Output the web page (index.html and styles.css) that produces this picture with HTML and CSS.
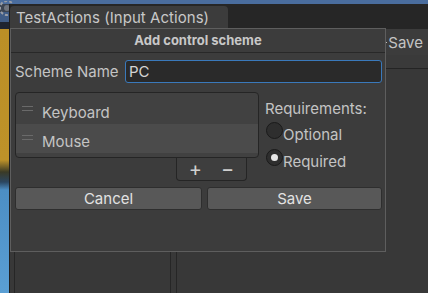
FILE: index.html
```html
<!DOCTYPE html>
<html>
<head>
<meta charset="utf-8">
<link rel="stylesheet" href="styles.css">
</head>
<body>
<div class="stage">
  <svg class="gizmo" width="20" height="20" viewBox="0 0 20 20">
    <circle cx="8" cy="7" r="7" fill="none" stroke="#9a9ea6" stroke-width="2" stroke-dasharray="3 2"/>
    <circle cx="8" cy="7" r="3" fill="#70757e"/>
  </svg>
  <div class="window">
    <div class="tabstrip">
      <div class="tab">TestActions (Input Actions)</div>
    </div>
    <div class="editor">
      <div class="toolbar"><span class="dash"></span><span class="tool-save">Save</span></div>
      <div class="subbar"></div>
      <div class="panes">
        <div class="pane p1"></div>
        <div class="pane p2"></div>
        <div class="pane p3"></div>
        <div class="pane p4"></div>
      </div>
    </div>
    <div class="dialog">
      <div class="dlg-title">Add control scheme</div>
      <div class="dlg-body">
        <div class="name-row">
          <span class="name-label">Scheme Name</span>
          <div class="field">PC</div>
        </div>
        <div class="mid-row">
          <div class="list-col">
            <div class="list">
              <div class="item"><span class="handle"></span><span class="item-text">Keyboard</span></div>
              <div class="item sel"><span class="handle"></span><span class="item-text">Mouse</span></div>
            </div>
            <div class="list-foot">
              <span class="pm">+</span>
              <span class="pm">−</span>
            </div>
          </div>
          <div class="req-col">
            <div class="req-label">Requirements:</div>
            <div class="radio"><span class="dot"></span><span class="radio-text">Optional</span></div>
            <div class="radio"><span class="dot on"></span><span class="radio-text">Required</span></div>
          </div>
        </div>
        <div class="btn-row">
          <div class="btn">Cancel</div>
          <div class="btn">Save</div>
        </div>
      </div>
    </div>
  </div>
</div>
</body>
</html>
```
FILE: styles.css
```css
html, body {
  margin: 0;
  padding: 0;
  background: #383838;
  overflow: hidden;
}
.stage {
  position: relative;
  width: 428px;
  height: 293px;
  overflow: hidden;
  font-family: Inter, "Noto Sans", sans-serif;
  background:
    linear-gradient(to bottom,
      #4a6d9e 0px, #4a6d9e 4px,
      #3c4552 4px, #3c4552 12px,
      #3f5c86 12px, #3f5c86 22px,
      #1e2430 22px, #1e2430 29px,
      #bb8f26 29px, #bd9229 160px,
      #3a3a26 172px, #2b4660 182px,
      #4c8ec4 190px, #5a9fd4 293px);
}
.gizmo {
  position: absolute;
  left: -1px;
  top: 1px;
}
.window {
  position: absolute;
  left: 9px;
  top: 4px;
  right: 0;
  bottom: 0;
  display: flex;
  flex-direction: column;
  background: #383838;
  border-left: 1px solid #1f1f1f;
}
.tabstrip {
  height: 25px;
  background: #262626;
  display: flex;
  align-items: flex-end;
  flex: none;
}
.tab {
  width: 218px;
  height: 23px;
  background: #3c3c3c;
  border-radius: 4px 4px 0 0;
  color: #c8c8c8;
  font-size: 15px;
  line-height: 23px;
  padding-left: 6px;
  box-sizing: border-box;
  letter-spacing: 0.05px;
}
.editor {
  flex: 1;
  display: flex;
  flex-direction: column;
}
.toolbar {
  height: 26px;
  background: #3c3c3c;
  display: flex;
  align-items: center;
  justify-content: flex-end;
  padding-right: 5px;
  flex: none;
}
.dash {
  width: 3px;
  height: 1px;
  background: #bdbdbd;
  margin-right: 1px;
}
.tool-save {
  color: #c4c4c4;
  font-size: 15px;
}
.subbar {
  height: 13px;
  background: #3a3a3a;
  border-bottom: 1px solid #242424;
  flex: none;
}
.panes {
  flex: 1;
  display: flex;
}
.pane {
  border-right: 1px solid #262626;
}
.p1 { width: 4px; }
.p2 { width: 155px; }
.p3 { width: 5px; }
.p4 { flex: 1; border-right: none; }

.dialog {
  position: absolute;
  left: 0px;
  top: 24px;
  width: 376px;
  height: 224px;
  box-sizing: border-box;
  background: #3c3c3c;
  border: 1px solid #5e5e5e;
  display: flex;
  flex-direction: column;
  color: #c4c4c4;
}
.dlg-title {
  height: 23px;
  border-bottom: 1px solid #282828;
  text-align: center;
  font-weight: 700;
  font-size: 13px;
  line-height: 23px;
  color: #c8c8c8;
  flex: none;
}
.dlg-body {
  padding: 7px 3px 0 4px;
  display: flex;
  flex-direction: column;
}
.name-row {
  display: flex;
  align-items: center;
  height: 23px;
}
.name-label {
  width: 110px;
  font-size: 15px;
  flex: none;
}
.field {
  flex: 1;
  height: 23px;
  box-sizing: border-box;
  background: #2a2a2a;
  border: 1px solid #3a79bb;
  border-radius: 3px;
  padding-left: 3px;
  font-size: 15px;
  line-height: 21px;
  color: #d4d4d4;
}
.mid-row {
  display: flex;
  margin-top: 9px;
}
.list-col {
  width: 244px;
  display: flex;
  flex-direction: column;
  align-items: flex-end;
}
.list {
  width: 244px;
  height: 66px;
  box-sizing: border-box;
  background: #414141;
  border: 1px solid #252525;
  border-radius: 4px;
  padding-top: 2px;
}
.item {
  height: 29px;
  display: flex;
  align-items: center;
  font-size: 15px;
  color: #c4c4c4;
}
.item.sel {
  background: #4b4b4b;
}
.item-text {
  padding-top: 7px;
  line-height: 18px;
}
.handle {
  width: 11px;
  height: 5px;
  border-top: 1px solid #6a6a6a;
  border-bottom: 1px solid #6a6a6a;
  margin-left: 6px;
  margin-right: 9px;
  margin-bottom: 2px;
  box-sizing: border-box;
}
.list-foot {
  width: 71px;
  height: 23px;
  box-sizing: border-box;
  margin-right: 12px;
  border: 1px solid #252525;
  border-top: none;
  border-radius: 0 0 4px 4px;
  background: #3e3e3e;
  display: flex;
  justify-content: center;
  gap: 19px;
  align-items: center;
}
.pm {
  font-size: 20px;
  color: #d0d0d0;
  line-height: 20px;
}
.req-col {
  margin-left: 6px;
  display: flex;
  flex-direction: column;
  font-size: 15px;
}
.req-label {
  height: 30px;
  line-height: 33px;
}
.radio {
  display: flex;
  align-items: flex-start;
  height: 27px;
  margin-left: 1px;
}
.radio-text {
  line-height: 25px;
}
.dot {
  width: 17px;
  height: 17px;
  box-sizing: border-box;
  border-radius: 50%;
  background: #2e2e2e;
  border: 1px solid #1a1a1a;
  flex: none;
  display: flex;
  align-items: center;
  justify-content: center;
}
.dot.on::after {
  content: "";
  width: 7px;
  height: 7px;
  border-radius: 50%;
  background: #e6e6e6;
}
.btn-row {
  display: grid;
  grid-template-columns: 187px 1fr;
  gap: 5px;
  margin-top: 6px;
}
.btn {
  height: 23px;
  box-sizing: border-box;
  background: #585858;
  border: 1px solid #2e2e2e;
  border-radius: 3px;
  text-align: center;
  font-size: 15px;
  line-height: 21px;
  color: #e2e2e2;
}
```
